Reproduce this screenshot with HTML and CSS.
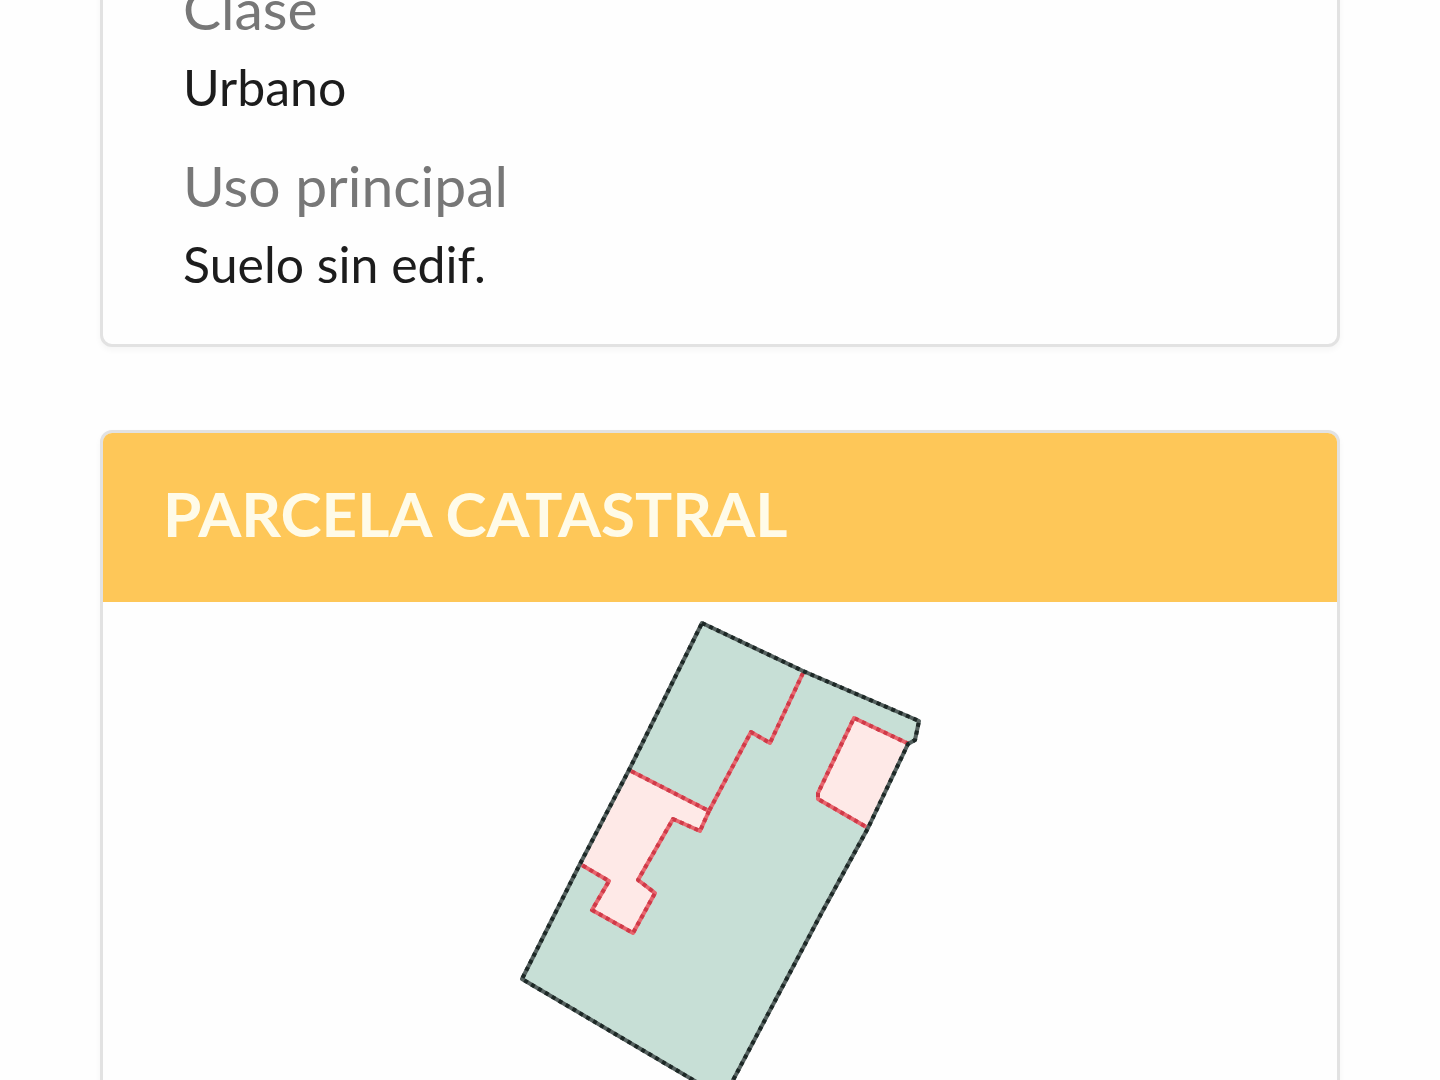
FILE: index.html
```
<!DOCTYPE html>
<html lang="es">
<head>
    <meta charset="UTF-8">
    <meta name="viewport" content="width=device-width, initial-scale=1.0">
    <title>Parcela catastral</title>
    <link rel="stylesheet" href="styles.css">
</head>
<body>
    <main>
        <section class="card card-data">
            <dl>
                <dt>Clase</dt>
                <dd>Urbano</dd>
                <dt>Uso principal</dt>
                <dd>Suelo sin edif.</dd>
            </dl>
        </section>

        <section class="card card-parcel">
            <h2>PARCELA CATASTRAL</h2>
            <svg class="parcel-map" viewBox="500 602 440 500" role="img" aria-label="Plano de la parcela">
                <defs>
                    <path id="limits" d="M803 673L770 743L751 732L709 811L629 770M709 811L700 831L673 819L638 880L655 893L633 933L592 910L609 881L580 864M909 744L854 718L818 793V799L868 828"/>
                    <path id="outline" d="M702 623L803 671L919 721L915 740L908 744L868 828L821 914L731 1084H700L522 979L580 864L629 770Z"/>
                </defs>
                <use class="plot" href="#outline"/>
                <!-- Buildings -->
                <polygon class="building" points="629,770 709,811 700,831 673,819 638,880 655,893 633,933 592,910 609,881 580,864"/>
                <polygon class="building" points="854,718 908,744 868,828 818,799 818,793"/>
                <!-- Inner limits -->
                <use class="limit" href="#limits"/>
                <use class="limit limit-dash" href="#limits"/>
                <!-- Plot edge -->
                <use class="outline" href="#outline"/>
                <use class="outline outline-dash" href="#outline"/>
            </svg>
        </section>
    </main>
</body>
</html>
```

FILE: styles.css
```
/* Global Styles */
* {
    box-sizing: border-box;
}

body {
    font-family: Lato, "Open Sans", sans-serif;
    background-color: #fefefe;
    color: #1c1c1c;
    height: 100vh;
    margin: 0;
    overflow: hidden;
}

main {
    display: flex;
    flex-direction: column;
    gap: 83px;
    margin-top: -40px;
    padding: 0 100px;
}

/* Cards */
.card {
    flex-shrink: 0;
    background-color: #fefefe;
    border: 3px solid #e2e2e2;
    border-radius: 12px;
    box-shadow: 0 3px 6px rgba(0, 0, 0, 0.04);
    overflow: hidden;
}

.card-data {
    padding: 8px 80px 38px;
}

dl {
    margin: 0;
}

dt {
    color: #777777;
    font-size: 57px;
    line-height: 74px;
}

dd {
    font-size: 50px;
    line-height: 84px;
    margin: 0 0 19px;
}

dd:last-child {
    margin-bottom: 0;
}

/* Parcel */
.card-parcel h2 {
    margin: 0;
    padding: 44px 60px 53px;
    background-color: #fec758;
    color: #fffbe8;
    font-size: 62px;
    line-height: 72px;
}

.parcel-map {
    display: block;
    width: 440px;
    margin: 0 auto;
}

.plot {
    fill: #c7dfd6;
}

.building {
    fill: #fee9e7;
}

.limit {
    fill: none;
    stroke: #e8656e;
    stroke-width: 4;
    stroke-linejoin: round;
}

.limit-dash {
    stroke: #cf3a48;
    stroke-dasharray: 4 4;
}

.outline {
    fill: none;
    stroke: #55615f;
    stroke-width: 4;
    stroke-linejoin: round;
}

.outline-dash {
    stroke: #1d2826;
    stroke-dasharray: 4 4;
}
```
